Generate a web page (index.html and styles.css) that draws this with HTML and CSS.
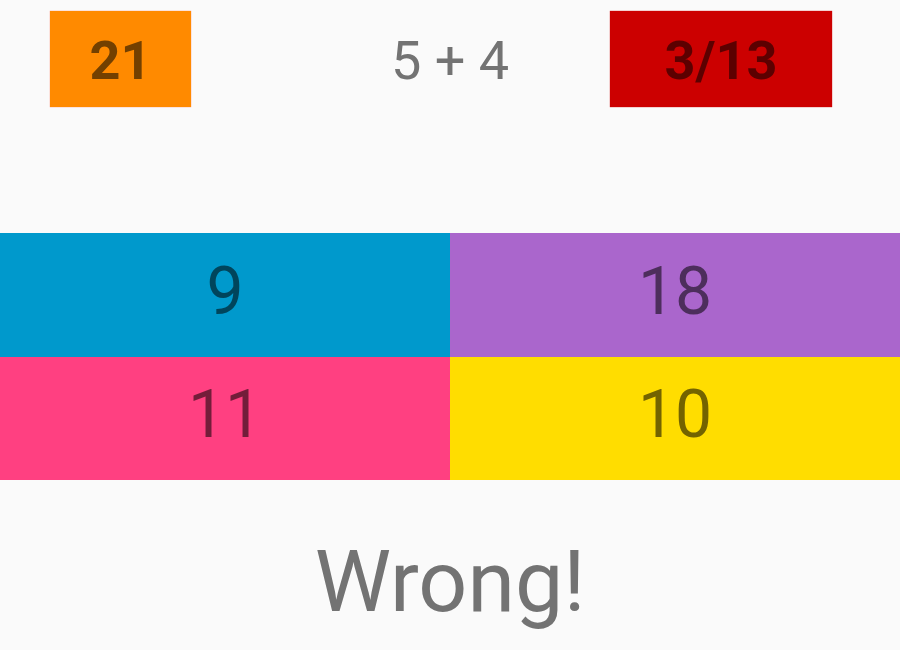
FILE: index.html
```html
<!DOCTYPE html>
<html lang="en">
<head>
<meta charset="utf-8">
<meta name="viewport" content="width=device-width, initial-scale=1">
<title>Math quiz</title>
<link rel="stylesheet" href="styles.css">
</head>
<body>
<main class="game">
  <header class="status">
    <div class="badge timer">21</div>
    <div class="question">5 + 4</div>
    <div class="badge score">3/13</div>
  </header>
  <section class="answers">
    <button class="answer blue" type="button">9</button>
    <button class="answer purple" type="button">18</button>
    <button class="answer pink" type="button">11</button>
    <button class="answer yellow" type="button">10</button>
  </section>
  <p class="result">Wrong!</p>
</main>
</body>
</html>
```

FILE: styles.css
```css
* {
  box-sizing: border-box;
}

body {
  margin: 0;
  background: #fafafa;
  color: #737373;
  font-family: Roboto, "Liberation Sans", sans-serif;
}

.game {
  display: grid;
  grid-template-rows: 233fr 247fr 170fr;
  min-height: 100vh;
}

.status {
  display: grid;
  grid-template-columns: repeat(3, 1fr);
  align-items: start;
  padding-top: 11px;
  font-size: 54px;
  line-height: 92px;
  text-align: center;
}

.status > div {
  padding-top: 4px;
}

.badge {
  font-weight: 700;
}

.timer {
  width: 47%;
  margin-left: 50px;
  background: #ff8a00;
  box-shadow: 0 0 1px #ff6a50;
  color: #734000;
}

.score {
  width: 74%;
  margin-left: 10px;
  background: #cc0000;
  box-shadow: 0 0 1px #cc0000;
  color: #5c0000;
}

.answers {
  display: grid;
  grid-template-columns: 1fr 1fr;
  grid-template-rows: 1fr 1fr;
}

.answer {
  border: 0;
  padding: 0 0 6px;
  font-family: inherit;
  font-size: 66px;
  line-height: 72px;
  cursor: pointer;
}

.blue {
  background: #0099cc;
  color: #00455c;
}

.purple {
  background: #aa66cc;
  color: #4d2e5c;
}

.pink {
  background: #ff4081;
  color: #731d3a;
}

.yellow {
  background: #ffdd00;
  color: #736300;
}

.result {
  margin: 0;
  padding-top: 54px;
  font-size: 86px;
  line-height: 96px;
  text-align: center;
}
```
